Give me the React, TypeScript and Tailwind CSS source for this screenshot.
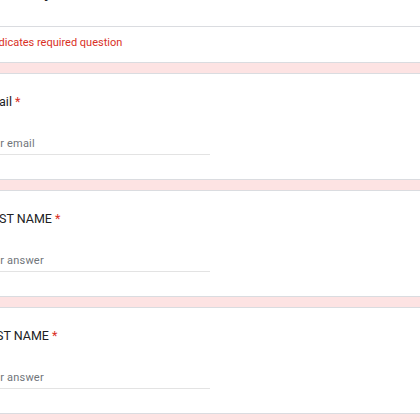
import React from "react";

const questions = [
  { label: "Email", placeholder: "Your email" },
  { label: "FIRST NAME", placeholder: "Your answer" },
  { label: "LAST NAME", placeholder: "Your answer" },
  { label: "PHONE", placeholder: "Your answer" },
];

const QuestionCard = ({ label, placeholder }: { label: string; placeholder: string }) => {
  return (
    <div className="bg-white border border-[#dadce0] pl-[17px] pt-[19px] pb-[24px]">
      <div className="text-[12.5px] leading-[18px] text-[#202124]">
        {label} <span className="text-[#d93025]">*</span>
      </div>
      <div className="mt-[25px] w-[229px] border-b border-[#e3e3e3] pb-[2px] text-[11px] leading-[16px] tracking-[0.2px] text-[#70757a]">
        {placeholder}
      </div>
    </div>
  );
};

export default function App() {
  return (
    <div className="w-[420px] h-[420px] overflow-hidden bg-[#fde3e3] font-['Roboto',sans-serif]">
      <div className="ml-[-37px] w-[480px] flex flex-col gap-[10px]">
        {/* header card */}
        <div className="bg-white border-b border-[#dadce0]">
          <div className="mt-[-25px] pb-[20px] border-b border-[#dadce0] pl-[31px]">
            <div className="text-[20px] leading-[31px] text-[#202124]">Survey</div>
          </div>
          <div className="pl-[19px] pt-[8px] pb-[11px] text-[11px] leading-[16px] text-[#d93025]">
            * Indicates required question
          </div>
        </div>

        {questions.map((q, i) => (
          <QuestionCard key={i} label={q.label} placeholder={q.placeholder} />
        ))}
      </div>
    </div>
  );
}
